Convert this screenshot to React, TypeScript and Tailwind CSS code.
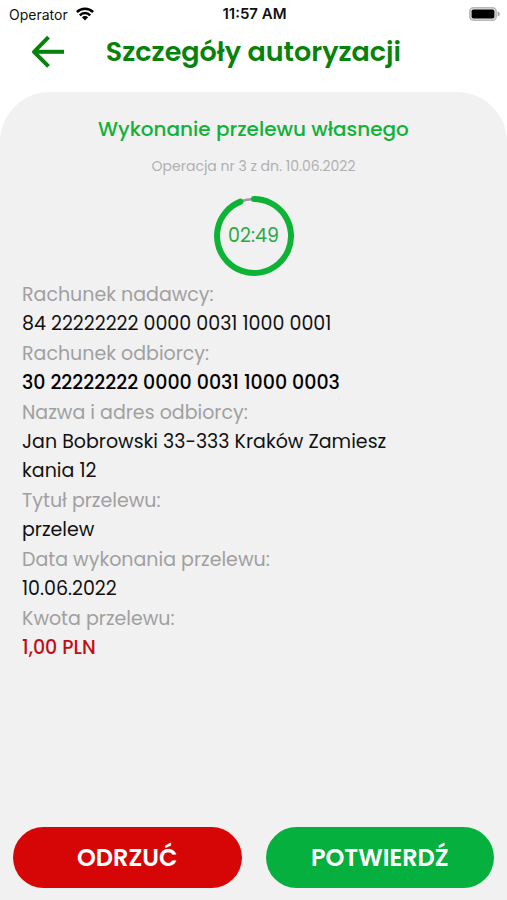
import clsx from 'clsx';

type Detail = {
  label: string;
  value: string;
  valueClass?: string;
};

const details: Detail[] = [
  { label: 'Rachunek nadawcy:', value: '84 22222222 0000 0031 1000 0001' },
  {
    label: 'Rachunek odbiorcy:',
    value: '30 22222222 0000 0031 1000 0003',
    valueClass: 'font-medium text-black',
  },
  { label: 'Nazwa i adres odbiorcy:', value: 'Jan Bobrowski 33-333 Kraków Zamiesz\nkania 12' },
  { label: 'Tytuł przelewu:', value: 'przelew' },
  { label: 'Data wykonania przelewu:', value: '10.06.2022' },
  { label: 'Kwota przelewu:', value: '1,00 PLN', valueClass: 'font-medium text-[#c20d12]' },
];

function StatusBar() {
  return (
    <div className="grid h-7 grid-cols-3 items-center pl-[9px] pr-[7px] font-['Inter',sans-serif] text-[14px] text-[#111]">
      <div className="flex items-center gap-2">
        <span>Operator</span>
        <svg width="18" height="14" viewBox="0 0 18 14" fill="none" stroke="#000" strokeWidth="2.5" aria-hidden="true">
          <path d="M0.9 5A11.6 11.6 0 0 1 17.1 5" />
          <path d="M3.8 8.3A7.3 7.3 0 0 1 14.2 8.3" />
          <path d="M9 13.4L5.9 10.3A4.4 4.4 0 0 1 12.1 10.3Z" fill="#000" stroke="none" />
        </svg>
      </div>
      <span className="text-center text-[15px] font-semibold">11:57 AM</span>
      <svg className="justify-self-end" width="31" height="14" viewBox="0 0 31 14" aria-hidden="true">
        <rect x="0.8" y="0.8" width="26.4" height="12.4" rx="3.8" fill="#e4e4e4" stroke="#b8b8b8" strokeWidth="1.6" />
        <rect x="2.6" y="2.4" width="22.8" height="9.2" rx="1.8" fill="#000" />
        <path d="M28.6 4.6C31.6 5.2 31.6 8.8 28.6 9.4Z" fill="#a5a5a5" />
      </svg>
    </div>
  );
}

function Header() {
  return (
    <header className="grid h-16 grid-cols-[65px_1fr_65px] items-start">
      <button type="button" aria-label="Wstecz" className="mt-[7px] justify-self-end">
        <svg width="34" height="34" viewBox="0 0 34 34" fill="none" stroke="#07820c" strokeWidth="4" aria-hidden="true">
          <path d="M17.5 2.2L3 16.8L17.5 31.4" strokeLinejoin="round" />
          <path d="M3 16.8H33" />
        </svg>
      </button>
      <h1 className="text-center text-[27px] leading-12 font-semibold whitespace-nowrap text-[#07820c]">
        Szczegóły autoryzacji
      </h1>
    </header>
  );
}

function Countdown() {
  return (
    <div role="timer" className="mt-[17px] grid size-[82px] place-items-center self-center">
      <svg className="col-start-1 row-start-1" width="82" height="82" viewBox="0 0 82 82" fill="none" aria-hidden="true">
        <circle cx="41" cy="41" r="37" stroke="#9b9b9b" strokeWidth="2.5" />
        <path d="M41 4A37 37 0 1 1 27.4 6.6" stroke="#0db334" strokeWidth="6" strokeLinecap="round" />
      </svg>
      <span className="col-start-1 row-start-1 text-[19px] text-[#2aa945]">02:49</span>
    </div>
  );
}

export default function App() {
  return (
    <div className="flex min-h-screen flex-col bg-white font-['Poppins','Inter',sans-serif]">
      <StatusBar />
      <Header />

      <main className="flex flex-1 flex-col rounded-t-[50px] bg-[#f1f1f1] px-[13px] pt-[21px] pb-[12px]">
        <h2 className="text-center text-[20px] leading-8 font-medium text-[#12b13a]">
          Wykonanie przelewu własnego
        </h2>
        <p className="mt-[9px] text-center text-[14px] leading-6 text-[#b0b0b0]">
          Operacja nr 3 z dn. 10.06.2022
        </p>
        <Countdown />

        <dl className="mt-[3px] flex flex-col gap-px px-[9px] text-[19px] leading-[29px]">
          {details.map(({ label, value, valueClass }) => (
            <div key={label}>
              <dt className="text-[#a0a0a0]">{label}</dt>
              <dd className={clsx('whitespace-pre-line', valueClass ?? 'text-[#111]')}>{value}</dd>
            </div>
          ))}
        </dl>

        <div className="mt-auto grid grid-cols-2 gap-6 pt-6 text-[24px] font-semibold text-white">
          <button type="button" className="h-[61px] rounded-full bg-[#d60606]">
            ODRZUĆ
          </button>
          <button type="button" className="h-[61px] rounded-full bg-[#06b03e]">
            POTWIERDŹ
          </button>
        </div>
      </main>
    </div>
  );
}
